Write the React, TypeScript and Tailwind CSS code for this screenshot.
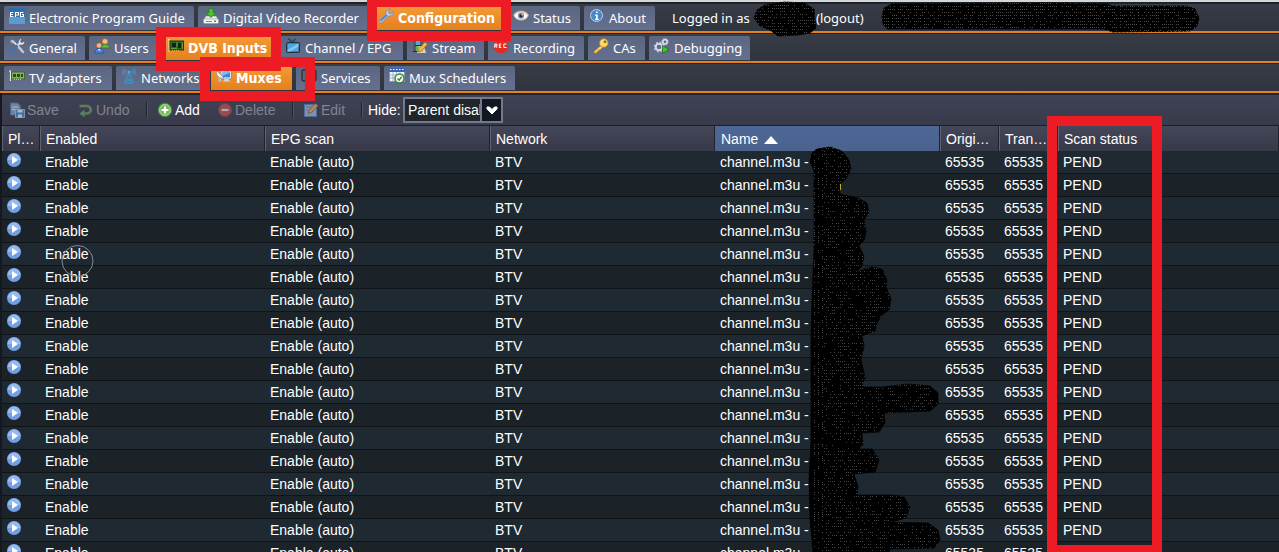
import type { ReactNode } from "react";

const svg = (children: ReactNode) => (
  <svg viewBox="0 0 16 16" className="size-4 shrink-0" aria-hidden="true">
    {children}
  </svg>
);

const board = (
  <>
    <path d="M1.5 3v10M0 3h2" stroke="#e8e8e8" strokeWidth="1.2" fill="none" />
    <rect x="2.5" y="4" width="13" height="7" fill="#86b35c" stroke="#3c6a2a" />
    <path d="M4 6h3v3H4zM8 6h3v3H8zM12 6h2v3h-2z" fill="#2a4a22" />
    <path d="M5 11.5h8" stroke="#e0c652" strokeDasharray="1 1" />
  </>
);

const icons = {
  epg: svg(
    <>
      <rect width="16" height="16" fill="#2c6dab" />
      <rect y="9" width="16" height="7" fill="#5b9bd3" />
      <path
        d="M4.500 4.500h-3v4h3M1.500 6.500h2.500M6.500 9V4.500h3v2.500h-3M14.500 4.500h-3v4h3v-2h-1.500"
        stroke="#fff"
        strokeWidth="1.100"
        fill="none"
      />
    </>,
  ),
  dvr: svg(
    <>
      <path d="M3 8h10l2.500 4H.5z" fill="#e8e8e8" stroke="#888" strokeWidth=".5" />
      <rect x=".5" y="11" width="15" height="4.500" rx="1" fill="#f6f6f6" stroke="#999" strokeWidth=".6" />
      <path d="M3 13.500h6" stroke="#888" />
      <rect x="11" y="12.500" width="2" height="1.500" fill="#37a22b" />
      <path d="M6 .5h4v4h3L8 9.500 3 4.500h3z" fill="#4cc234" stroke="#26801b" strokeWidth=".8" />
    </>,
  ),
  wrench: svg(
    <>
      <path
        d="M1.500 14.500a1.800 1.800 0 0 1 0-2.500L8 6.500C7.300 3.500 9.500.8 12.500 1l-2 2.300.5 2 2 .5L15.300 3.500c.3 3-2.300 5.200-5.300 4.700L4 14.500a1.800 1.800 0 0 1-2.500 0z"
        fill="#b9cfee"
        stroke="#6486bd"
        strokeWidth=".8"
      />
      <path d="M2.500 13L9 7" stroke="#3e7bd5" strokeWidth="1.500" />
    </>,
  ),
  eye: svg(
    <>
      <path d="M.5 7C3 1.500 13 1.500 15.500 7 14 13.500 3 14.500.5 7z" fill="#f5d5b8" stroke="#c99874" strokeWidth=".7" />
      <path d="M1.500 8C4 4.300 12 4.300 14.500 8 12 12 4 12 1.500 8z" fill="#fff" />
      <circle cx="8" cy="7.800" r="3" fill="#5a87c3" />
      <circle cx="8" cy="7.800" r="1.500" fill="#15264a" />
      <circle cx="9" cy="6.800" r=".7" fill="#fff" />
    </>,
  ),
  info: svg(
    <>
      <circle cx="7.500" cy="7.500" r="6" fill="#4d87c6" stroke="#b9d3ee" />
      <path d="M7 3.500h1.800V5H7zM6 6.500h2.700v4.200h1V12H6v-1.300h1V7.800H6z" fill="#fff" />
    </>,
  ),
  tools: svg(
    <>
      <path d="M3.500 2.500l10 10.500" stroke="#e9e9e9" strokeWidth="1.800" />
      <path d="M2 2.500L5 5" stroke="#bbb" strokeWidth="2.500" />
      <path d="M2 14L9.500 6.500" stroke="#3e75b4" strokeWidth="2.500" strokeLinecap="round" />
      <path d="M8.500 7.500l3-3" stroke="#ddd" strokeWidth="2" />
      <path d="M12.500.8L11 3.500l1.500 1.500 2.800-1.300c.2 3-2.800 3.600-4.800 2.500C9 4 10 1.500 12.500.8z" fill="#e5e5e5" />
      <path d="M10 9.500l4 4.500" stroke="#c9c9c9" strokeWidth="2.400" strokeLinecap="round" />
    </>,
  ),
  users: svg(
    <>
      <circle cx="11" cy="3.500" r="2.800" fill="#f2bd72" stroke="#b87421" strokeWidth=".7" />
      <path d="M7.500 10c0-5 7.500-5 8 0z" fill="#67b53e" stroke="#347526" strokeWidth=".7" />
      <circle cx="5" cy="7.500" r="2.800" fill="#edb487" stroke="#8a4c25" strokeWidth=".7" />
      <path d="M.5 15c.5-6 9-6 9.500 0z" fill="#4c88d4" stroke="#214d8d" strokeWidth=".7" />
      <path d="M4 11l1.200 2L6.500 11z" fill="#fff" />
    </>,
  ),
  dvb: svg(
    <>
      <path d="M1 1v13M0 1.500h2" stroke="#ddd" fill="none" />
      <rect x="2" y="3" width="13.500" height="9" fill="#2d6a2a" stroke="#173c17" />
      <path d="M4 5h4v4H4zM10 5h3v5h-3z" fill="#0e260f" />
      <path d="M3 10.500h6M9 4v5M14.500 4v7" stroke="#78b34e" strokeWidth=".7" />
      <path d="M4 12.500h8" stroke="#d8b544" strokeDasharray="1 1" />
    </>,
  ),
  tv: svg(
    <>
      <path d="M3 .5L7.500 4 10.500 1" stroke="#263b52" strokeWidth="1.200" fill="none" />
      <rect x="1.500" y="4.500" width="13" height="10" rx="1" fill="#295a84" stroke="#1b3148" />
      <rect x="2.500" y="5.500" width="11" height="8" fill="#4fa7de" />
      <path d="M2.500 12l11-6.500v3L5 13.500H2.500z" fill="#83c8ee" />
    </>,
  ),
  stream: svg(
    <>
      <rect x="1" y="1" width="10" height="13" fill="#252b2d" />
      <path d="M2 1.500v12M10 1.500v12" stroke="#eee" strokeDasharray="1 1" />
      <rect x="3.500" y="2" width="5" height="5" fill="#54a5d9" />
      <rect x="3.500" y="8" width="5" height="5" fill="#68ae47" />
      <path d="M7 8h5l2 7H5z" fill="#f4f0c8" opacity=".8" />
      <path d="M6 14l1-3.500L13 4l2.500 2.200L9.500 13z" fill="#f3bb45" stroke="#92601d" strokeWidth=".7" />
    </>,
  ),
  rec: svg(
    <>
      <circle cx="8" cy="8" r="7.300" fill="#e32b20" />
      <path
        d="M1.800 9.800V6h2v2h-2M2.800 8l1.300 1.800M8.300 6h-2v3.500h2M6.300 7.800h1.500M13.500 6h-2.700v3.500h2.700"
        stroke="#fff"
        fill="none"
      />
    </>,
  ),
  key: svg(
    <>
      <path d="M8 7.500l-7 6V15h3v-1.500h1.500V12H7l3-3z" fill="#ffd75e" stroke="#b98420" strokeWidth=".8" />
      <circle cx="10.800" cy="5" r="4.300" fill="#ffdc69" stroke="#b98420" strokeWidth=".8" />
      <circle cx="12" cy="3.800" r="1.400" fill="#87651f" />
    </>,
  ),
  gears: svg(
    <>
      <circle cx="5" cy="9" r="3.300" fill="none" stroke="#d8d8ee" strokeWidth="2" />
      <circle cx="5" cy="9" r="4.700" fill="none" stroke="#c5c5e2" strokeWidth="1.600" strokeDasharray="1.800 1.900" />
      <circle cx="11" cy="3.800" r="2.200" fill="none" stroke="#dedef5" strokeWidth="1.600" />
      <circle cx="11" cy="3.800" r="3.200" fill="none" stroke="#c5c5e2" strokeDasharray="1.300 1.200" />
      <path d="M8.500 7.500l6.500 4-6.500 4z" fill="#42c72a" stroke="#176d12" strokeWidth=".8" />
    </>,
  ),
  adapter: svg(board),
  tower: svg(
    <>
      <path d="M8 4L3.500 15.500M8 4l4.500 11.500M6.800 8h2.500M6 10.500l5 3M10.500 10.500L5 13.500M4.500 15h7" stroke="#3f8fc0" strokeWidth="1.300" fill="none" />
      <circle cx="8" cy="4" r="1.600" fill="#55a9d9" />
      <path d="M5 1.500a4 4 0 0 0 0 5M11 1.500a4 4 0 0 1 0 5M2.800 .5a7 7 0 0 0 0 7M13.200 .5a7 7 0 0 1 0 7" stroke="#4b98c3" fill="none" />
    </>,
  ),
  mux: svg(
    <>
      <rect x="5" y="2" width="10.500" height="9" rx="1" fill="#d9e5f2" stroke="#6d7d92" strokeWidth=".7" />
      <path d="M6.500 3.500H14v5.800H6.500z" fill="#3985d5" />
      <path d="M6.500 8L14 4.500V3.500H6.500z" fill="#7fbaf0" />
      <path d="M7 13.500h7l-1.500-2.500h-4z" fill="#cfd4dd" />
      <path d="M.5 2.500C0 8 3 10.500 8 10z" fill="#f4f4f4" stroke="#8c8c8c" strokeWidth=".7" />
      <path d="M2 13.500h4L4.500 9H3z" fill="#b7bdc8" />
      <path d="M4 6.500l3-3" stroke="#ddd" />
    </>,
  ),
  services: svg(
    <>
      <rect x="1" y="2" width="14" height="11" rx="1.500" fill="#5c6577" stroke="#2b303c" strokeWidth="1.300" />
      <path d="M5 14.500h6" stroke="#343b49" />
    </>,
  ),
  schedule: svg(
    <>
      <rect x=".5" y=".5" width="15" height="13" fill="#f2f5fa" stroke="#8597bd" />
      <path d="M0 0h16v4H0z" fill="#3e63b8" />
      <path d="M1 1.500h14" stroke="#fff" strokeDasharray="1.500 1.500" />
      <path d="M4 4v9M7.500 4v9M11 4v9M1 7h14M1 10h14" stroke="#90a2c8" strokeWidth=".8" />
      <circle cx="10.500" cy="10.500" r="4.500" fill="#f4f8f2" stroke="#37883b" strokeWidth="1.500" />
      <path d="M8.500 10.500l1.700 1.700 2.500-3.500" stroke="#2d7934" fill="none" strokeWidth="1.200" />
    </>,
  ),
  save: svg(
    <>
      <path d="M1.500 1h7l3 3v9h-10z" fill="#6e83a3" stroke="#4e6789" />
      <path d="M3 5h6M3 7.500h5" stroke="#a8b7cb" />
      <rect x="6.500" y="7.500" width="9" height="8" fill="#46719f" stroke="#81a2c7" strokeWidth=".8" />
      <path d="M8.500 8h5v2.500h-5zM9 12.500h4v3H9z" fill="#a9b7c8" />
    </>,
  ),
  undo: svg(
    <>
      <path d="M1.500 4h7.500a3.500 3.500 0 0 1 0 7.500H6" stroke="#5a7f5c" strokeWidth="2.600" fill="none" />
      <path d="M6.500 7.500v8l-5-4z" fill="#5a7f5c" />
    </>,
  ),
  add: svg(
    <>
      <circle cx="8" cy="8" r="6.800" fill="#73b85c" stroke="#3d8735" />
      <circle cx="8" cy="8" r="5.300" fill="none" stroke="#b6dea8" strokeWidth=".8" />
      <path d="M8 4.500v7M4.500 8h7" stroke="#fff" strokeWidth="2.200" />
    </>,
  ),
  remove: svg(
    <>
      <circle cx="8" cy="8" r="6.500" fill="#934c51" stroke="#75404a" />
      <path d="M4.500 8h7" stroke="#b4aab0" strokeWidth="2.200" />
    </>,
  ),
  edit: svg(
    <>
      <rect x="1.500" y="2.500" width="12" height="12" fill="#8191aa" stroke="#4b6c9c" />
      <path d="M3 5h8M3 8h5" stroke="#64748d" />
      <path d="M5 11.500L6 8.500 12.500 1.500l2.500 2.200L8.500 10.500z" fill="#b28c56" stroke="#6c5744" strokeWidth=".8" />
    </>,
  ),
};

type IconName = keyof typeof icons;
type TabItem = { label: string; icon: IconName; width: string; active?: boolean };

const mainTabs: TabItem[] = [
  { label: "Electronic Program Guide", icon: "epg", width: "w-[190px]" },
  { label: "Digital Video Recorder", icon: "dvr", width: "w-[171px]" },
  { label: "Configuration", icon: "wrench", width: "w-[131px]", active: true },
  { label: "Status", icon: "eye", width: "w-[72px]" },
  { label: "About", icon: "info", width: "w-[71px]" },
];

const configTabs: TabItem[] = [
  { label: "General", icon: "tools", width: "w-[81px]" },
  { label: "Users", icon: "users", width: "w-[70px]" },
  { label: "DVB Inputs", icon: "dvb", width: "w-[113px]", active: true },
  { label: "Channel / EPG", icon: "tv", width: "w-[123px]" },
  { label: "Stream", icon: "stream", width: "w-[77px]" },
  { label: "Recording", icon: "rec", width: "w-[96px]" },
  { label: "CAs", icon: "key", width: "w-[57px]" },
  { label: "Debugging", icon: "gears", width: "w-[101px]" },
];

const inputTabs: TabItem[] = [
  { label: "TV adapters", icon: "adapter", width: "w-[108px]" },
  { label: "Networks", icon: "tower", width: "w-[91px]" },
  { label: "Muxes", icon: "mux", width: "w-[81px]", active: true },
  { label: "Services", icon: "services", width: "w-[84px]" },
  { label: "Mux Schedulers", icon: "schedule", width: "w-[131px]" },
];

function TabStrip({ tabs, children }: { tabs: TabItem[]; children?: ReactNode }) {
  return (
    <nav className="flex h-[30px] items-end gap-1 border-b-2 border-[#e5801d] bg-linear-to-b from-[#383c47] to-[#30343e] pb-px pl-1 font-['Noto_Sans',sans-serif] text-[13px] leading-5 shadow-[inset_0_1px_0_#20232b]">
      {tabs.map((tab) => (
        <button
          key={tab.label}
          type="button"
          className={`flex h-6 shrink-0 items-start gap-1 whitespace-nowrap rounded-t-xs pl-[5px] pt-0.5 text-white ${tab.width} ${
            tab.active
              ? "bg-linear-to-b from-[#f39a35] to-[#e5801d] font-['DejaVu_Sans_Condensed','DejaVu_Sans',sans-serif] text-[14px] font-bold leading-5"
              : "bg-linear-to-b from-[#5b6781] to-[#64708f]"
          }`}
        >
          {icons[tab.icon]}
          {tab.label}
        </button>
      ))}
      {children}
    </nav>
  );
}

function ToolButton({ icon, label, width, disabled }: { icon: IconName; label: string; width: string; disabled?: boolean }) {
  return (
    <button
      type="button"
      disabled={disabled}
      className={`flex shrink-0 items-center gap-0.5 text-white disabled:text-[#82848f] ${width}`}
    >
      {icons[icon]}
      {label}
    </button>
  );
}

const Separator = () => (
  <span className="mr-[9px] h-4 w-0.5 shrink-0 border-l border-r border-l-[#20232c] border-r-[#515463]" />
);

const columns = [
  { label: "Pl…", width: "w-[38px]" },
  { label: "Enabled", width: "w-[225px]" },
  { label: "EPG scan", width: "w-[225px]" },
  { label: "Network", width: "w-[225px]" },
  { label: "Name", width: "w-[225px]", sorted: true },
  { label: "Origi…", width: "w-[59px]" },
  { label: "Tran…", width: "w-[59px]" },
  { label: "Scan status", width: "w-auto" },
];

const rowCells = ["Enable", "Enable (auto)", "BTV", "channel.m3u -", "65535", "65535", "PEND"];
const rows = Array.from({ length: 18 }, (_, i) => i);

function speckles(x: number, y: number, w: number, h: number, count: number, vertical: boolean) {
  let seed = x * 31 + y * 17 + 7;
  const next = () => {
    seed = (seed * 1103515245 + 12345) % 2147483648;
    return seed / 2147483648;
  };
  let d = "";
  for (let i = 0; i < count; i++) {
    const across = vertical ? 4 : 2;
    const down = vertical ? 2 : 3;
    const px = x + Math.floor((next() * w) / across) * across;
    const py = y + Math.floor((next() * h) / down) * down;
    d += `M${px} ${py}h1v1h-1z`;
  }
  return d;
}

const namesMask =
  "M813 552L810 520 809 480 811 440 811 340 812 300 814 250 814 171 810 162 812 153 817 149 830 147 842 151 849 160 851 169 846 179 839 184 840 194 858 198 867 203 869 212 864 220 866 232 864 240 859 246 864 256 862 266 856 272 872 267 882 269 887 280 886 287 891 299 889 310 882 315 877 323 875 331 862 336 864 346 861 359 862 364 865 378 861 387 882 387 908 384 930 386 938 393 938 404 930 411 884 413 885 423 879 432 862 433 863 445 858 449 872 449 879 460 875 472 854 474 858 486 857 495 892 495 904 497 910 507 906 518 895 521 882 522 928 523 938 530 940 540 934 548 890 549 889 552z";
const userMask =
  "M754 18L757 10 765 5 785 2 804 3 814 9 815 20 816 28 810 33 799 35 778 36 770 30 760 26z";
const serverMask =
  "M882 17L884 8 892 4 1050 3 1108 4 1112 6 1186 6 1195 9 1199 18 1197 26 1190 31 1113 32 1104 29 887 29 883 24z";

function Markings() {
  return (
    <svg viewBox="0 0 1279 552" className="pointer-events-none absolute left-0 top-0 h-[552px] w-[1279px]" aria-hidden="true">
      <clipPath id="names"><path d={namesMask} /></clipPath>
      <clipPath id="user"><path d={userMask} /></clipPath>
      <clipPath id="server"><path d={serverMask} /></clipPath>
      <g strokeLinejoin="round" stroke="#000" strokeDasharray="3 1">
        <path d={namesMask} />
        <path d={userMask} />
        <path d={serverMask} />
      </g>
      <path d={speckles(814, 150, 12, 402, 360, true)} fill="#4a4a4a" clipPath="url(#names)" />
      <path d={speckles(824, 148, 118, 404, 3600, false)} fill="#444" clipPath="url(#names)" />
      <path d={speckles(754, 2, 64, 36, 300, false)} fill="#484848" clipPath="url(#user)" />
      <path d={speckles(882, 3, 320, 30, 1200, false)} fill="#4c4c4c" clipPath="url(#server)" />
      <path d="M840.500 184v6" stroke="#d5a321" />
      <circle cx="77.500" cy="261" r="15.500" fill="none" stroke="#858991" />
      <g fill="none" stroke="#ed1c24" strokeWidth="10">
        <path d="M372 2h134v34H372z" />
        <path d="M161 32h115v34H161z" />
        <path d="M205 62h105v34H205z" />
        <path d="M1052 121h105v429h-105z" />
      </g>
    </svg>
  );
}

export default function App() {
  return (
    <main className="relative h-screen w-full overflow-hidden bg-[#1b2228] font-['Liberation_Sans',Arial,sans-serif] text-[14px] text-white">
      <header className="border-t-2 border-[#d4d6d8] pt-px">
        <TabStrip tabs={mainTabs}>
          <span className="flex h-6 items-start gap-[61px] whitespace-nowrap pl-[13px] pt-0.5">
            <span className="w-[83px]">Logged in as</span>
            <a href="#logout">(logout)</a>
          </span>
        </TabStrip>
        <TabStrip tabs={configTabs} />
        <TabStrip tabs={inputTabs} />
      </header>

      <section className="border-l-2 border-[#15191f]">
        <div
          role="toolbar"
          aria-label="Mux actions"
          className="flex h-[33px] items-center border-b border-t-2 border-b-[#1b1e26] border-t-[#20242d] bg-linear-to-b from-[#3f4254] to-[#393b4b] pl-[7px]"
        >
          <ToolButton icon="save" label="Save" width="w-[69px]" disabled />
          <ToolButton icon="undo" label="Undo" width="w-[68px]" disabled />
          <Separator />
          <ToolButton icon="add" label="Add" width="w-[60px]" />
          <ToolButton icon="remove" label="Delete" width="w-[75px]" disabled />
          <Separator />
          <ToolButton icon="edit" label="Edit" width="w-[58px]" disabled />
          <Separator />
          <label htmlFor="hide" className="w-[30px] shrink-0 whitespace-nowrap -ml-1">Hide:</label>
          <div className="ml-[5px] flex h-[26px] items-stretch border-2 border-[#747988] bg-[#20262b]">
            <select id="hide" className="w-[75px] appearance-none overflow-hidden bg-[#20262b] pl-[3px] text-[14px] text-white outline-none">
              <option>Parent disabled</option>
            </select>
            <span className="flex w-[21px] items-center justify-center border-l-2 border-[#747988] bg-[#111722]">
              <svg viewBox="0 0 12 8" className="h-2 w-3" aria-hidden="true">
                <path d="M1 1h2.500L6 3.500 8.500 1H11v2L6 8 1 3z" fill="#fff" stroke="#fff" strokeLinejoin="round" />
              </svg>
            </span>
          </div>
        </div>

        <table className="w-full table-fixed border-separate border-spacing-0 text-left">
          <thead>
            <tr className="h-[25px]">
              {columns.map((c) => (
                <th
                  key={c.label}
                  scope="col"
                  className={`border-l border-r border-l-[#606273] border-r-[#20232c] p-0 pl-[5px] pt-0.5 font-normal whitespace-nowrap ${c.width} ${
                    c.sorted ? "bg-linear-to-b from-[#4d6796] to-[#4b628c]" : "bg-linear-to-b from-[#45475a] to-[#373948]"
                  }`}
                >
                  <span className="flex items-center gap-1.5">
                    {c.label}
                    {c.sorted && (
                      <svg viewBox="0 0 14 8" className="h-2 w-3.5" aria-hidden="true">
                        <path d="M7 0l7 8H0z" fill="#fff" />
                      </svg>
                    )}
                  </span>
                </th>
              ))}
            </tr>
          </thead>
          <tbody>
            {rows.map((row) => (
              <tr key={row} className="h-[23px] odd:bg-[#1f2932] even:bg-[#1b2329]">
                <td className="border-b border-[#101417] p-0 pl-[5px]">
                  <button type="button" aria-label="Play" className="flex h-[22px] items-start pt-0.5">
                    <svg viewBox="0 0 14 14" className="size-3.5" aria-hidden="true">
                      <circle cx="7" cy="7" r="7" fill="#719ee4" />
                      <path d="M.6 7a6.400 6.400 0 0 1 12.800 0z" fill="#94b9f1" />
                      <path d="M5 3l6 4-6 4z" fill="#fff" />
                    </svg>
                  </button>
                </td>
                {rowCells.map((cell, i) => (
                  <td key={i} className="whitespace-nowrap border-b border-[#101417] p-0 pl-[5px] leading-[22px]">
                    {cell}
                  </td>
                ))}
              </tr>
            ))}
          </tbody>
        </table>
      </section>

      <Markings />
    </main>
  );
}
